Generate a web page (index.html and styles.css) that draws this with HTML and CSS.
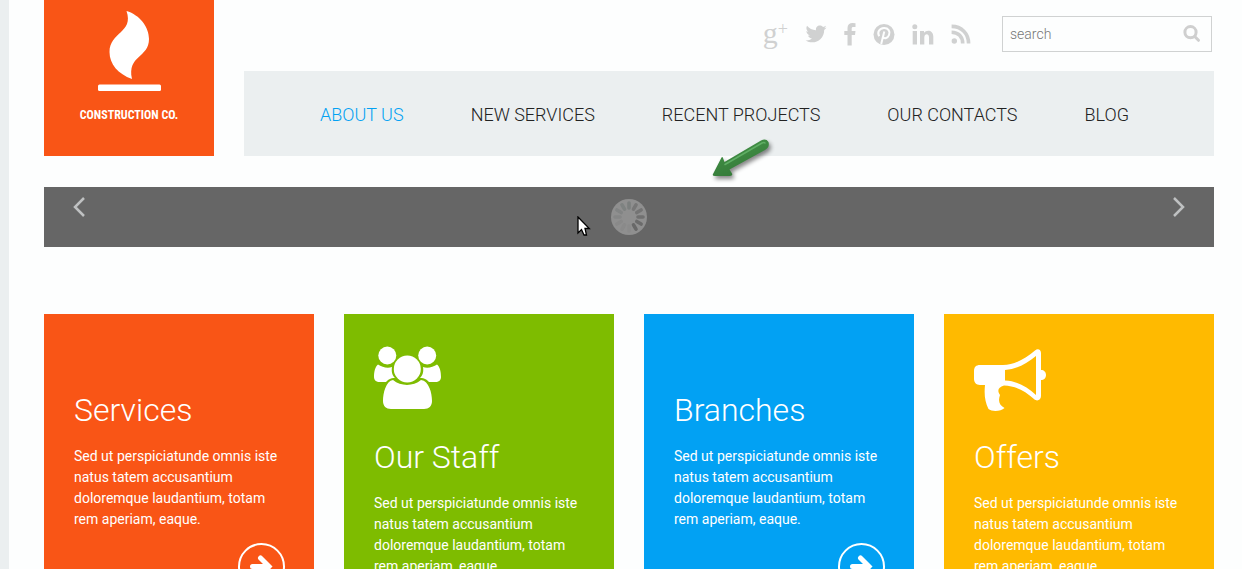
FILE: index.html
```html
<!DOCTYPE html>
<html lang="en">
<head>
<meta charset="utf-8">
<title>Construction Co.</title>
<link rel="stylesheet" href="styles.css">
</head>
<body>
<div class="page">
  <header class="header">
    <a class="logo" href="#">
      <svg class="logo-mark" viewBox="-1 0 64 80" aria-hidden="true">
        <path d="M28.500 0C42 4 51 16 51 28C51 47 29 44 34 68C20 63 11.500 53 11.500 41C11.500 21 36 22 28.500 0Z"/>
        <rect x="0" y="73.500" width="63" height="6.500" rx="1.500"/>
      </svg>
      <span class="logo-name">CONSTRUCTION CO.</span>
    </a>
    <div class="header-main">
      <div class="tools">
        <div class="social">
          <a class="gplus" href="#" aria-label="Google Plus"><span>g</span><sup>+</sup></a>
          <a href="#" aria-label="Twitter"><svg width="22" height="24" viewBox="0 0 22 24"><path d="M21.500 4.500C20.700 5 20 5.200 19 5.300C20 4.700 20.700 3.900 21 2.800C20 3.400 19 3.800 18 4C15 .800 10.300 3.200 11 7.300C7.300 7.100 4.200 5.400 2 2.800C.800 5 1.400 7.400 3.300 8.700C2.600 8.600 2 8.400 1.400 8.100C1.400 10.300 3 12 4.900 12.500C4.200 12.700 3.600 12.700 3 12.600C3.600 14.300 5.200 15.500 7 15.600C5.300 17 3 17.600.500 17.400C9 22.500 19.200 17 19.200 6.900C20.200 6.200 21 5.400 21.500 4.500Z"/></svg></a>
          <a href="#" aria-label="Facebook"><svg width="12" height="24" viewBox="0 0 12 24"><path d="M11.500.200V4H9.300C8 4 7.700 4.600 7.700 5.500V8H11.500L11 12H7.700V22.500H3.500V12H.300V8H3.500V5C3.500 1.800 5.500 0 8.500 0Z"/></svg></a>
          <a href="#" aria-label="Pinterest"><svg width="22" height="24" viewBox="0 0 22 24"><circle cx="11" cy="11.500" r="10.500"/><path class="cut" d="M6.200 13.300C3.800 9.500 6.300 5.300 10.900 5.100C15.200 4.900 17.600 8.200 16 12C14.800 15.200 11.500 16 10 14.200M11.300 8.500L8.200 21"/></svg></a>
          <a href="#" aria-label="LinkedIn"><svg width="22" height="24" viewBox="0 0 22 24"><circle cx="2.800" cy="3.800" r="2.500"/><path d="M.700 8H5V21.500H.700ZM8 8H12V9.800C14.600 6.300 21.300 7 21.300 13.500V21.500H17V14.500C17 10 12.300 10.500 12.300 14.500V21.500H8Z"/></svg></a>
          <a href="#" aria-label="RSS"><svg width="20" height="24" viewBox="0 0 20 24"><circle cx="3.300" cy="18" r="2.700"/><path class="wave" d="M.600 9.200C7.300 9.200 11.700 13.700 11.700 20.500M.600 3.400C10.600 3.400 17.600 10.500 17.600 20.500"/></svg></a>
        </div>
        <form class="search" role="search">
          <input type="text" placeholder="search" aria-label="Search">
          <button type="button" aria-label="Submit search"><svg width="18" height="18" viewBox="0 0 18 18"><circle cx="7.500" cy="7.200" r="5.600"/><path d="M11.700 11.500L15.500 15.300"/></svg></button>
        </form>
      </div>
      <nav class="nav">
        <a class="active" href="#">ABOUT US</a>
        <a href="#">NEW SERVICES</a>
        <a href="#">RECENT PROJECTS</a>
        <a href="#">OUR CONTACTS</a>
        <a href="#">BLOG</a>
      </nav>
    </div>
  </header>

  <section class="slider" aria-label="Slideshow">
    <button type="button" aria-label="Previous"><svg width="14" height="22" viewBox="0 0 14 22"><path d="M12 2L3 11L12 20"/></svg></button>
    <svg class="loader" width="36" height="36" viewBox="0 0 36 36" role="img" aria-label="Loading">
      <circle cx="18" cy="18" r="18" fill="#8f8f8f"/>
      <g stroke-width="3.600" stroke-linecap="round">
        <path stroke="#7b7f7e" d="M18 9V4"/>
        <path stroke="#777" d="M22.500 10.200L25 5.900"/>
        <path stroke="#747474" d="M25.800 13.500L30.100 11"/>
        <path stroke="#707070" d="M27 18H32"/>
        <path stroke="#6b6b6b" d="M25.800 22.500L30.100 25"/>
        <path stroke="#686868" d="M22.500 25.800L25 30.100"/>
        <path stroke="#8b8b8b" d="M18 27V32"/>
        <path stroke="#8a8a8a" d="M13.500 25.800L11 30.100"/>
        <path stroke="#898989" d="M10.200 22.500L5.900 25"/>
        <path stroke="#858686" d="M9 18H4"/>
        <path stroke="#828484" d="M10.200 13.500L5.900 11"/>
        <path stroke="#7e8281" d="M13.500 10.200L11 5.900"/>
      </g>
    </svg>
    <button type="button" aria-label="Next"><svg width="14" height="22" viewBox="0 0 14 22"><path d="M2 2L11 11L2 20"/></svg></button>
    <svg class="pointer" width="14" height="20" viewBox="0 0 14 20" aria-hidden="true"><path d="M1 1V17L4.500 13.500L7 19H9.500L8 12.500H12.300Z"/></svg>
    <svg class="callout" width="64" height="48" viewBox="0 0 64 48" aria-hidden="true">
      <defs>
        <linearGradient id="leaf" x1="0" y1="0" x2="0.500" y2="1"><stop offset="0" stop-color="#5fa362"/><stop offset=".4" stop-color="#3f8b43"/><stop offset="1" stop-color="#347a38"/></linearGradient>
      </defs>
      <path d="M2 36L10.500 19.500Q11.500 18.500 12 20L13.500 24L50 2.500Q55 0 57.500 4Q59 9 54 12L18.500 31.500L21 35.500Q22 38 19 38H4Q1 38 2 36Z" fill="url(#leaf)"/>
      <path d="M14 26.500L51 5Q53 4 54 5" fill="none" stroke="#5fae64" stroke-width="1.500" stroke-linecap="round"/>
    </svg>
  </section>

  <main class="cards">
    <article class="card orange">
      <h2>Services</h2>
      <p>Sed ut perspiciatunde omnis iste natus tatem accusantium doloremque laudantium, totam rem aperiam, eaque.</p>
      <a class="more" href="#" aria-label="More about services"><svg width="47" height="47" viewBox="0 0 47 47"><circle cx="23.500" cy="23.500" r="22.500"/><path d="M14.500 23.500H31M22.500 15L31 23.500L22.500 32"/></svg></a>
    </article>
    <article class="card green with-icon">
      <svg class="icon" width="72" height="72" viewBox="0 0 72 72" aria-hidden="true">
        <circle cx="13.300" cy="11.500" r="9"/><circle cx="53.200" cy="11.500" r="9"/>
        <path d="M4 20.500C8 23.500 14 24.500 18 23C17 29 19 32 21 34C16 34 14 36 12 38H6C2 38 0 36 0 33C0 28 1 23 4 20.500ZM63 20.500C59 23.500 53 24.500 49 23C50 29 48 32 46 34C51 34 53 36 55 38H61C65 38 67 36 67 33C67 28 66 23 63 20.500Z"/>
        <circle cx="33.300" cy="25" r="13.500"/>
        <path d="M19 36C27 42.500 39 42.500 47 36C55 37 58 49 58 57C58 62 55 65 50 65H17C12 65 9 62 9 57C9 49 12 37 19 36Z"/>
      </svg>
      <h2>Our Staff</h2>
      <p>Sed ut perspiciatunde omnis iste natus tatem accusantium doloremque laudantium, totam rem aperiam, eaque.</p>
    </article>
    <article class="card blue">
      <h2>Branches</h2>
      <p>Sed ut perspiciatunde omnis iste natus tatem accusantium doloremque laudantium, totam rem aperiam, eaque.</p>
      <a class="more" href="#" aria-label="More about branches"><svg width="47" height="47" viewBox="0 0 47 47"><circle cx="23.500" cy="23.500" r="22.500"/><path d="M14.500 23.500H31M22.500 15L31 23.500L22.500 32"/></svg></a>
    </article>
    <article class="card yellow with-icon">
      <svg class="icon" width="72" height="72" viewBox="0 0 72 72" aria-hidden="true">
        <path fill-rule="evenodd" d="M6 21H29C41 21 52 14 61 6.500C64 4 67 6 67 9V26C70 26 72 28 72 31C72 34 70 36 67 36V52C67 56 63 58 60 55C51 47 42 42 30 41.500C24 43 23 47 26 51C24 57 25 61 30.500 64C27 67.500 18 68 14.500 65C11 58 10 51 11 41H6C2 41 0 38 0 35V27C0 23 2 21 6 21ZM31 26V36.500C43 37 53 43 62 51V12C52 20 43 25 31 26Z"/>
      </svg>
      <h2>Offers</h2>
      <p>Sed ut perspiciatunde omnis iste natus tatem accusantium doloremque laudantium, totam rem aperiam, eaque.</p>
    </article>
  </main>
</div>
</body>
</html>
```

FILE: styles.css
```css
* { box-sizing: border-box; }

body {
  height: 100vh;
  margin: 0;
  overflow: hidden;
  background: #ebeff0;
  color: #222;
  font: 14px/21px Roboto, "Liberation Sans", sans-serif;
}

a { color: inherit; text-decoration: none; }
button { border: 0; padding: 0; background: none; cursor: pointer; }
svg { display: block; }

.page {
  min-height: 100vh;
  margin-left: 9px;
  padding: 0 28px 0 35px;
  background: #fdfefe;
}

.header { display: flex; gap: 30px; }

.logo {
  display: flex;
  flex: 0 0 170px;
  flex-direction: column;
  align-items: center;
  gap: 14px;
  padding: 11px 0 30px;
  background: #f95516;
  color: #fff;
}
.logo-mark { width: 64px; height: 80px; fill: #fff; }
.logo-name {
  font-family: "Roboto Condensed", Roboto, sans-serif;
  font-size: 12px;
  font-weight: 700;
}

.header-main { display: flex; flex: 1; flex-direction: column; }

.tools {
  display: flex;
  justify-content: flex-end;
  gap: 31px;
  height: 71px;
  padding: 16px 2px 0 0;
}

.social {
  display: flex;
  gap: 17px;
  padding-top: 7px;
  color: #d0d1d1;
}
.social a { height: 24px; }
.social svg { fill: #d0d1d1; }
.social .cut { fill: none; stroke: #fdfefe; stroke-width: 2; }
.social .wave { fill: none; stroke: #d0d1d1; stroke-width: 3.6; }

.gplus {
  display: flex;
  font: 30px/20px "Liberation Serif", serif;
}
.gplus sup { font-size: 18px; line-height: 12px; vertical-align: top; }

.search {
  display: flex;
  align-items: center;
  width: 210px;
  height: 36px;
  padding: 0 10px 0 7px;
  border: 1px solid #d0d2d2;
}
.search input {
  flex: 1;
  min-width: 0;
  border: 0;
  padding: 0;
  outline: 0;
  background: none;
  font: 300 14px/21px Roboto, sans-serif;
}
.search input::placeholder { color: #777; opacity: 1; }
.search svg { fill: none; stroke: #cfcfcf; stroke-width: 3; stroke-linecap: round; }

.nav {
  display: flex;
  flex: 1;
  align-items: center;
  gap: 67px;
  padding: 2px 76px 0;
  background: #ebeff0;
  font-size: 18px;
  font-weight: 300;
  white-space: nowrap;
}
.nav .active { color: #02a1f3; }

.slider {
  position: relative;
  display: flex;
  align-items: center;
  justify-content: space-between;
  height: 60px;
  margin: 31px 0 67px;
  padding: 0 28px;
  background: #666;
}
.slider button { align-self: flex-start; margin-top: 9px; }
.slider button svg { fill: none; stroke: #bfc1c2; stroke-width: 2.5; }

.pointer {
  position: absolute;
  top: 29px;
  left: 533px;
  fill: #fff;
  stroke: #000;
  stroke-width: 1.3;
}
.callout {
  position: absolute;
  top: -49px;
  left: 667px;
  filter: drop-shadow(2px 3px 2px #0007);
}

.cards {
  display: grid;
  grid-template-columns: repeat(4, 1fr);
  gap: 30px;
}
.card {
  min-height: 306px;
  padding: 76px 29px 30px 30px;
  color: #fff;
}
.with-icon { padding-top: 30px; }
.icon { margin-bottom: 21px; fill: #fff; }
.card h2 {
  margin: 0 0 16px;
  font-size: 32px;
  font-weight: 300;
  line-height: 40px;
}
.card p { margin: 0 0 13px; }
.more { display: flex; justify-content: flex-end; }
.more svg { fill: none; stroke: #fff; stroke-width: 2; }
.more path { stroke-width: 5; stroke-linecap: round; }

.orange { background: #f95516; }
.green { background: #7ebc00; }
.blue { background: #02a1f3; }
.yellow { background: #ffba00; }
```
